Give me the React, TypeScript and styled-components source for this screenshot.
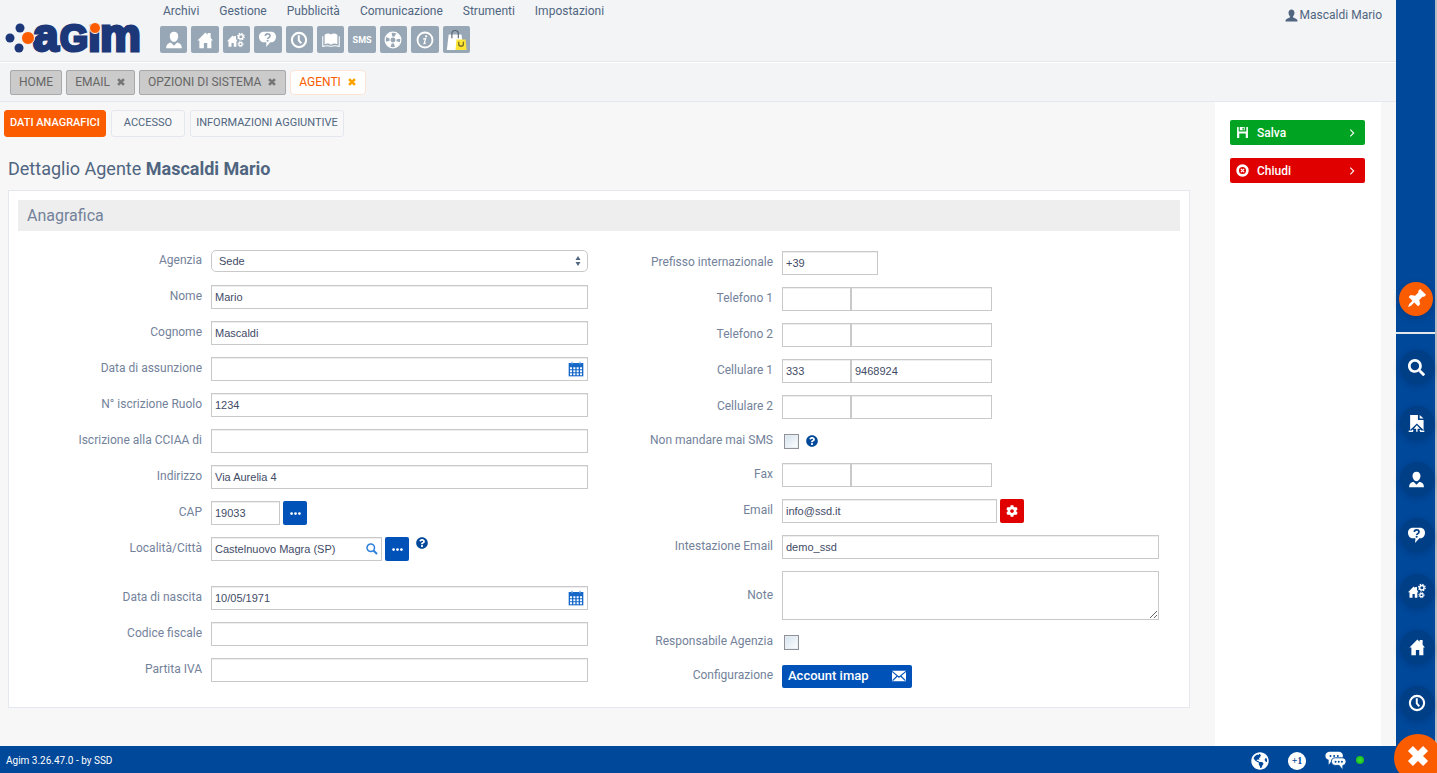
import React from 'react';
import styled, { createGlobalStyle, css } from 'styled-components';
import { FaCog, FaGlobeAmericas, FaQuestionCircle, FaSearch } from 'react-icons/fa';

const color = {
  navy: '#00489a',
  navyDark: '#003f86',
  blue: '#0052b8',
  orange: '#fc5c00',
  green: '#00a322',
  red: '#e00000',
  slate: '#4f6580',
  label: '#73829a',
  line: '#e4e7ee',
  field: '#c9c9c9',
};

const GlobalStyle = createGlobalStyle`
  *, *::before, *::after { box-sizing: border-box; }
  body {
    margin: 0;
    background: #f7f7f7;
    color: ${color.slate};
    font-family: Roboto, "Liberation Sans", sans-serif;
    font-size: 12px;
    line-height: 16px;
  }
  button, input, select, textarea { margin: 0; font: inherit; color: inherit; }
  button { cursor: pointer; }
  svg { display: block; flex: none; }
`;

/* ---------- icons ---------- */

type IconProps = { size?: number };

const Svg = styled.svg.attrs({ viewBox: '0 0 24 24', 'aria-hidden': true })<{ $size: number }>`
  width: ${(p) => p.$size}px;
  height: ${(p) => p.$size}px;
  fill: currentColor;
`;

const UserIcon = ({ size = 18 }: IconProps) => (
  <Svg $size={size}>
    <path d="M12 1c3.600 0 5.800 2.600 5.600 6.200C17.400 11 15 14.500 12 14.500S6.600 11 6.400 7.200C6.200 3.600 8.400 1 12 1z" />
    <path d="M1.500 23c0-4.600 2-6.600 6.300-7.700L12 19.500l4.200-4.200c4.300 1.100 6.300 3.100 6.300 7.700z" />
  </Svg>
);

const PersonIcon = ({ size = 13 }: IconProps) => (
  <Svg $size={size}>
    <path d="M12 1c3.400 0 5.500 2.400 5.500 6 0 2.800-1 5-2.500 6.500v2c3 1.500 8 2.500 8 5.500v2H1v-2c0-3 5-4 8-5.500v-2C7.500 12 6.500 9.800 6.500 7c0-3.600 2.100-6 5.500-6z" />
  </Svg>
);

const HomeIcon = ({ size = 18 }: IconProps) => (
  <Svg $size={size}>
    <path d="M2 12.500 12.500 2l3 3V2.500h4V9l3 3.500h-2V23H15v-7h-4.500v7H4.500V12.500z" />
  </Svg>
);

const HomeGearsIcon = ({ size = 18 }: IconProps) => (
  <Svg $size={size}>
    <path d="M0 13.500 7.500 6l2 2V6.500h2.500v4l2 3h-1.500V21H9v-5H6v5H2v-7.500z" />
    <g fill="none" stroke="currentColor">
      <circle cx="18.500" cy="7.500" r="3" strokeWidth="2" />
      <circle cx="18.500" cy="7.500" r="4.500" strokeWidth="1.500" strokeDasharray="1.800 1.730" />
      <circle cx="18" cy="17.500" r="2.200" strokeWidth="1.800" />
      <circle cx="18" cy="17.500" r="3.500" strokeWidth="1.200" strokeDasharray="1.500 1.250" />
    </g>
  </Svg>
);

const QuestionBubbleIcon = ({ size = 18, hole }: IconProps & { hole: string }) => (
  <Svg $size={size}>
    <path d="M7 1h10c4.500 0 7 3 7 7s-2.500 8-7 8h-1l-6 6.500.5-6.500H7c-4.500 0-7-4-7-8s2.500-7 7-7z" />
    <path d="M9 7c0-4 6.500-4 6.500 0 0 2.200-3.200 2.400-3.200 4.300" fill="none" stroke={hole} strokeWidth="2.400" />
    <circle cx="12.200" cy="13.800" r="1.500" fill={hole} />
  </Svg>
);

const ClockIcon = ({ size = 18 }: IconProps) => (
  <Svg $size={size}>
    <circle cx="12" cy="12" r="9.500" fill="none" stroke="currentColor" strokeWidth="2.800" />
    <path d="M11.700 5.500v7l3.300 4" fill="none" stroke="currentColor" strokeWidth="2.600" />
  </Svg>
);

const BookIcon = ({ size = 18 }: IconProps) => (
  <Svg $size={size}>
    <path d="M3.500 5C6 3 10 3 12 4.800 14 3 18 3 20.500 5v12.500c-3-1-6-1-8.500.8-2.500-1.800-5.500-1.800-8.500-.8z" />
    <path d="M1 7v13.500c4-1.200 8-1.200 11 0 3-1.200 7-1.200 11 0V7" fill="none" stroke="currentColor" strokeWidth="1.400" />
  </Svg>
);

const LifeRingIcon = ({ size = 18 }: IconProps) => (
  <Svg $size={size}>
    <g fill="none" stroke="currentColor">
      <circle cx="12" cy="12" r="10.500" strokeWidth="1.600" />
      <circle cx="12" cy="12" r="4" strokeWidth="1.400" />
      <circle cx="12" cy="12" r="7" strokeWidth="6" strokeDasharray="6.500 4.495" strokeDashoffset="8.750" />
    </g>
  </Svg>
);

const InfoIcon = ({ size = 18 }: IconProps) => (
  <Svg $size={size}>
    <circle cx="12" cy="12" r="10" fill="none" stroke="currentColor" strokeWidth="2.400" />
    <circle cx="13.500" cy="7" r="1.500" />
    <path d="m9.500 10.800 3.300-.8-2 6.800 2.200-.6" fill="none" stroke="currentColor" strokeWidth="1.600" />
  </Svg>
);

const ShopBagIcon = () => (
  <Svg $size={22}>
    <path d="M4 6h14l2 17H2z" fill="#fff" />
    <path d="M7.500 10V5c0-4.500 7-4.500 7 0v5" fill="none" stroke="#55606c" strokeWidth="1.200" />
    <path d="M12.500 11.500h10l1 11.500h-12z" fill="#fde535" />
    <path d="M15 14v2.500c0 3 5 3 5 0V14" fill="none" stroke="#6c6420" strokeWidth="1.300" />
  </Svg>
);

const CrossIcon = ({ size = 10 }: IconProps) => (
  <Svg $size={size}>
    <path d="m5 5 14 14M19 5 5 19" fill="none" stroke="currentColor" strokeWidth="6.500" />
  </Svg>
);

const PinIcon = () => (
  <Svg $size={20}>
    <path
      transform="rotate(45 12 12)"
      d="M7 0h10v3l-1.500 1.500v5.500l4.500 3v3.500h-6.500V22L12 25.500 10.500 22v-5.500H4V13l4.500-3V4.500L7 3z"
    />
  </Svg>
);

const FileIcon = ({ size = 18 }: IconProps) => (
  <Svg $size={size}>
    <path d="M3 0h11v7h8v14l-9.500-9L3 21z" />
    <path d="M16.500 0v5H22z" />
    <path d="M1 23h5l1-2M23 23h-5l-1-2M12.500 23.500V18" fill="none" stroke="currentColor" strokeWidth="2" />
    <path d="m12.500 14.500 4.500 5H8z" />
  </Svg>
);

const SaveIcon = ({ size = 13 }: IconProps) => (
  <Svg $size={size}>
    <path d="M2 2h3v8h14V2h3v20h-4v-8H6v8H2zM7 2h9v6H7zM12 3v4h2.500V3z" fillRule="evenodd" />
  </Svg>
);

const CloseRingIcon = ({ size = 13 }: IconProps) => (
  <Svg $size={size}>
    <circle cx="12" cy="12" r="9" fill="none" stroke="currentColor" strokeWidth="5" />
    <path d="m9 9 6 6M15 9l-6 6" stroke="currentColor" strokeWidth="2.400" />
  </Svg>
);

const ChevronIcon = () => (
  <Svg $size={8}>
    <path d="m7 2 10 10L7 22" fill="none" stroke="currentColor" strokeWidth="3.200" />
  </Svg>
);

const MailIcon = () => (
  <Svg $size={14}>
    <path d="M0 3h24v18H0z" />
    <path d="m0 4 12 10L24 4M1 20l8-8M23 20l-8-8" fill="none" stroke={color.blue} strokeWidth="2" />
  </Svg>
);

const DotsIcon = () => (
  <Svg $size={11}>
    <circle cx="3.500" cy="12" r="3" />
    <circle cx="12" cy="12" r="3" />
    <circle cx="20.500" cy="12" r="3" />
  </Svg>
);

const CalendarIcon = () => (
  <Svg $size={16}>
    <path d="M1 3h22v20H1z" fill="#1668c8" />
    <path d="M6 1v4M18 1v4" stroke="#6fa3e0" strokeWidth="2" />
    <path
      d="M3 9.500h3v3H3zM8 9.500h3v3H8zM13 9.500h3v3h-3zM18 9.500h3v3h-3zM3 14h3v3H3zM8 14h3v3H8zM13 14h3v3h-3zM18 14h3v3h-3zM3 18.500h3v3H3zM8 18.500h3v3H8zM13 18.500h3v3h-3zM18 18.500h3v3h-3z"
      fill="#fff"
    />
  </Svg>
);

const LensIcon = () => (
  <Svg $size={12}>
    <circle cx="9.500" cy="9.500" r="7.500" fill="none" stroke="#2f80dc" strokeWidth="3" />
    <path d="m15 15 7 7" stroke="#2f80dc" strokeWidth="4" />
  </Svg>
);

const SortIcon = () => (
  <Svg $size={12}>
    <path d="M12 2l5 8H7zM12 22l5-8H7z" />
  </Svg>
);

const ChatIcon = () => (
  <Svg $size={22}>
    <path d="M6 2h8c4 0 5.500 2 5.500 4.500S18 11 14 11H8l-4 5v-5.500C2 10 .5 9 .5 6.500S2 2 6 2z" />
    <path
      d="M11.500 8.500h7c3 0 4.500 1.800 4.500 4s-1.500 4.300-3.500 4.300V22l-4-5.200h-4C8.500 16.800 7 15 7 12.500s1.500-4 4.500-4z"
      stroke={color.navy}
      strokeWidth="1"
    />
    <g fill={color.navy}>
      <circle cx="6" cy="6.500" r="1.100" />
      <circle cx="10" cy="6.500" r="1.100" />
      <circle cx="14" cy="6.500" r="1.100" />
      <circle cx="11.500" cy="12.700" r="1.100" />
      <circle cx="15" cy="12.700" r="1.100" />
      <circle cx="18.500" cy="12.700" r="1.100" />
    </g>
  </Svg>
);

const LogoSvg = styled.svg`
  width: 138px;
  height: 36px;
  overflow: visible;
  text {
    font-family: 'Liberation Sans', Arial, sans-serif;
    font-weight: 700;
    fill: #1c3879;
    stroke: #1c3879;
    stroke-width: 3px;
  }
`;

const Logo = () => (
  <LogoSvg viewBox="0 0 138 36" role="img" aria-label="agim">
    <g fill="#1c3879">
      <circle cx="5" cy="18" r="4.500" />
      <circle cx="15" cy="8" r="4.500" />
      <circle cx="14" cy="28" r="4.500" />
    </g>
    <text x="28" y="31" fontSize="46">a</text>
    <text x="55" y="31" fontSize="36">G</text>
    <text x="83" y="31" fontSize="46">ı</text>
    <text x="95" y="31" fontSize="46">m</text>
    <circle cx="23" cy="18" r="6.500" fill={color.orange} stroke="#f3f4f6" />
    <circle cx="90" cy="8" r="5.500" fill={color.orange} stroke="#f3f4f6" />
  </LogoSvg>
);

/* ---------- shell ---------- */

const Shell = styled.div`
  display: flex;
  min-height: 100vh;
  overflow: hidden;
`;

const Page = styled.div`
  flex: 1;
  min-width: 0;
  display: flex;
  flex-direction: column;
`;

const Header = styled.header`
  display: flex;
  align-items: flex-start;
  padding: 3px 14px 8px 5px;
  background: #f3f4f6;
  border-bottom: 1px solid ${color.line};
`;

const LogoLink = styled.a`
  margin: 17px 17px -3px 0;
`;

const MenuBlock = styled.div`
  flex: 1;
`;

const MenuBar = styled.nav`
  display: flex;
  gap: 20px;
  padding-left: 3px;
`;

const MenuLink = styled.a`
  color: ${color.slate};
  text-decoration: none;
`;

const Toolbar = styled.div`
  display: grid;
  grid-template-columns: repeat(10, 1fr);
  gap: 4px;
  width: 310px;
  margin-top: 7px;
`;

const Tile = styled.button`
  display: flex;
  align-items: center;
  justify-content: center;
  height: 27px;
  padding: 0;
  border: 0;
  border-radius: 2px;
  background: #98a7b6;
  color: #fff;
  font-size: 9px;
  font-weight: 700;
`;

const UserLink = styled.a`
  display: flex;
  align-items: center;
  gap: 2px;
  margin-top: 4px;
  color: ${color.slate};
  text-decoration: none;
`;

const TabBar = styled.nav`
  display: flex;
  align-items: center;
  gap: 4px;
  height: 40px;
  padding-left: 10px;
  background: #f3f4f6;
  border-top: 1px solid #fff;
  border-bottom: 1px solid ${color.line};
`;

const Tab = styled.div<{ $active?: boolean }>`
  display: flex;
  align-items: center;
  gap: 6px;
  height: 25px;
  padding: 0 8px;
  border: 1px solid #a9a9a9;
  border-radius: 2px;
  background: #cbcbcb;
  color: #666;
  ${(p) =>
    p.$active &&
    css`
      border-color: #fde3d4;
      border-radius: 4px;
      background: #fff;
      color: ${color.orange};
    `}
`;

const TabLink = styled.a`
  color: inherit;
  text-decoration: none;
`;

const TabClose = styled.button<{ $active?: boolean }>`
  padding: 0;
  border: 0;
  background: none;
  color: ${(p) => (p.$active ? '#fba400' : '#777')};
`;

const Body = styled.div`
  flex: 1;
  display: flex;
`;

const Content = styled.main`
  flex: 1;
  min-width: 0;
  padding: 8px 25px 36px 4px;
`;

const Aside = styled.aside`
  flex: none;
  width: 166px;
  margin-right: 15px;
  padding: 18px 16px 18px 15px;
  background: #fff;
`;

const ActionButton = styled.button<{ $color: string }>`
  display: flex;
  align-items: center;
  width: 100%;
  height: 25px;
  margin-bottom: 13px;
  padding: 0 9px 0 6px;
  border: 0;
  border-radius: 2px;
  background: ${(p) => p.$color};
  color: #fff;
  font-weight: 500;
`;

const ActionLabel = styled.span`
  flex: 1;
  padding-left: 8px;
  text-align: left;
`;

const SubTabs = styled.nav`
  display: flex;
  gap: 5px;
`;

const SubTab = styled.button<{ $active?: boolean; $wide?: boolean }>`
  height: 27px;
  padding: 0 ${(p) => (p.$wide ? 12 : 5)}px 2px;
  border: 1px solid ${(p) => (p.$active ? color.orange : color.line)};
  border-radius: 3px;
  background: ${(p) => (p.$active ? color.orange : '#f8f8f8')};
  color: ${(p) => (p.$active ? '#fff' : color.slate)};
  font-size: 11px;
  font-weight: ${(p) => (p.$active ? 500 : 400)};
`;

const Title = styled.h1`
  margin: 19px 4px 9px;
  font-size: 18px;
  font-weight: 400;
  line-height: 25px;
`;

/* ---------- form ---------- */

const Panel = styled.section`
  margin-left: 4px;
  padding: 9px 9px 13px;
  border: 1px solid ${color.line};
  background: #fff;
`;

const PanelTitle = styled.h2`
  margin: 0 0 12px;
  padding: 0 9px;
  background: #eee;
  color: ${color.label};
  font-size: 16px;
  font-weight: 400;
  line-height: 31px;
`;

const Form = styled.form`
  display: grid;
  grid-template-columns: 1fr 1fr;
  padding-right: 20px;
`;

const Column = styled.div<{ $lowered?: boolean }>`
  min-width: 0;
  padding-top: ${(p) => (p.$lowered ? 2 : 0)}px;
`;

const Row = styled.div<{ $height?: number; $spaced?: boolean }>`
  display: grid;
  grid-template-columns: 184px minmax(0, 1fr);
  column-gap: 9px;
  align-items: center;
  height: ${(p) => p.$height ?? 36}px;
  margin-bottom: ${(p) => (p.$spaced ? 13 : 0)}px;
  padding-right: 1px;
`;

const Label = styled.label`
  padding-bottom: 2px;
  color: ${color.label};
  text-align: right;
`;

const Controls = styled.div`
  display: flex;
  align-items: center;
`;

const fieldText = css`
  color: #3f4b66;
  font-family: 'Liberation Sans', Arial, sans-serif;
  font-size: 11px;
`;

const Input = styled.input<{ $width?: number }>`
  ${fieldText}
  width: ${(p) => (p.$width ? `${p.$width}px` : '100%')};
  height: 24px;
  padding: 0 3px 1px;
  border: 1px solid ${color.field};
  border-radius: 0;
  background: #fff;
  box-shadow: inset 0 1px 0 #eee;
`;

const FieldWrap = styled.div<{ $width?: number }>`
  position: relative;
  width: ${(p) => (p.$width ? `${p.$width}px` : '100%')};
`;

const FieldIcon = styled.span`
  position: absolute;
  top: 0;
  right: 4px;
  display: flex;
  align-items: center;
  height: 100%;
  pointer-events: none;
`;

const Select = styled.select`
  ${fieldText}
  display: block;
  appearance: none;
  width: 100%;
  height: 22px;
  padding: 0 20px 0 7px;
  border: 1px solid ${color.field};
  border-radius: 5px;
  background: #fff;
`;

const TextArea = styled.textarea`
  ${fieldText}
  display: block;
  width: 100%;
  height: 49px;
  border: 1px solid ${color.field};
  background: #fff;
`;

const SquareButton = styled.button<{ $color?: string }>`
  display: flex;
  align-items: center;
  justify-content: center;
  width: 24px;
  height: 24px;
  margin-left: 3px;
  padding: 0;
  border: 0;
  border-radius: 2px;
  background: ${(p) => p.$color ?? color.blue};
  color: #fff;
`;

const Checkbox = styled.input`
  appearance: none;
  width: 15px;
  height: 15px;
  margin-left: 2px;
  border: 1px solid #8e9298;
  background: linear-gradient(135deg, #d3e2ee, #fff);
  box-shadow: inset 0 0 0 1px #e9eef2;
`;

const Help = styled.span<{ $raised?: boolean }>`
  margin-left: 7px;
  align-self: ${(p) => (p.$raised ? 'flex-start' : 'center')};
  color: ${color.navy};
  font-size: 12px;
`;

const AccountButton = styled.button`
  display: flex;
  align-items: center;
  justify-content: space-between;
  width: 130px;
  height: 23px;
  padding: 0 6px;
  border: 0;
  border-radius: 2px;
  background: ${color.blue};
  color: #fff;
  font-size: 13px;
  font-weight: 500;
`;

/* ---------- footer and rail ---------- */

const Footer = styled.footer`
  display: flex;
  align-items: center;
  height: 27px;
  padding: 2px 32px 0 6px;
  background: ${color.navy};
  color: #fff;
  font-size: 10px;
`;

const FooterTools = styled.div`
  display: flex;
  align-items: center;
  gap: 19px;
  margin-left: auto;
  font-size: 18px;
`;

const FooterButton = styled.button`
  display: flex;
  align-items: center;
  padding: 0;
  border: 0;
  background: none;
  color: #fff;
`;

const PlusOne = styled.span`
  width: 18px;
  border-radius: 9px;
  background: #fff;
  color: ${color.navy};
  font: 700 10px/18px 'Liberation Serif', serif;
`;

const ChatStatus = styled.span`
  display: flex;
  align-items: center;
  gap: 9px;
`;

const OnlineDot = styled.span`
  width: 8px;
  height: 8px;
  margin-bottom: 2px;
  border-radius: 50%;
  background: radial-gradient(#3be03b, #10b010);
`;

const Rail = styled.nav`
  position: sticky;
  top: 0;
  flex: none;
  display: flex;
  flex-direction: column;
  align-items: center;
  justify-content: flex-end;
  gap: 22px;
  width: 41px;
  height: 100vh;
  padding: 0 0 53px 2px;
  background: ${color.navy};
  border-right: 2px solid #b9bcc2;
`;

const PinGroup = styled.div`
  display: flex;
  justify-content: center;
  align-self: stretch;
  margin: 0 0 -6px -2px;
  padding-bottom: 16px;
  border-bottom: 2px solid #e3e6ea;
`;

const RailButton = styled.button<{ $accent?: boolean }>`
  display: flex;
  align-items: center;
  justify-content: center;
  width: 34px;
  height: 34px;
  padding: 0;
  border: 0;
  border-radius: 50%;
  background: ${(p) => (p.$accent ? color.orange : color.navyDark)};
  box-shadow: 0 2px 6px rgba(0, 30, 80, 0.3);
  color: #fff;
`;

const CloseRail = styled.button`
  position: absolute;
  right: -7px;
  bottom: -9px;
  display: flex;
  align-items: center;
  justify-content: center;
  width: 48px;
  height: 48px;
  padding: 0 0 4px;
  border: 0;
  border-radius: 50%;
  background: ${color.orange};
  color: #fff;
`;

/* ---------- data ---------- */

const menu = ['Archivi', 'Gestione', 'Pubblicità', 'Comunicazione', 'Strumenti', 'Impostazioni'];

const tiles: [string, React.ReactNode][] = [
  ['Clienti', <UserIcon />],
  ['Immobili', <HomeIcon />],
  ['Gestione immobili', <HomeGearsIcon />],
  ['Richieste', <QuestionBubbleIcon hole="#98a7b6" size={17} />],
  ['Agenda', <ClockIcon />],
  ['Rubrica', <BookIcon />],
  ['SMS', 'SMS'],
  ['Assistenza', <LifeRingIcon />],
  ['Informazioni', <InfoIcon />],
  ['Negozio', <ShopBagIcon />],
];

const tabs = [
  { name: 'HOME' },
  { name: 'EMAIL', closable: true },
  { name: 'OPZIONI DI SISTEMA', closable: true },
  { name: 'AGENTI', closable: true, active: true },
];

const railItems: [string, React.ReactNode][] = [
  ['Cerca', <FaSearch size={17} />],
  ['Documenti', <FileIcon size={17} />],
  ['Clienti', <UserIcon size={17} />],
  ['Richieste', <QuestionBubbleIcon hole={color.navyDark} size={17} />],
  ['Gestione immobili', <HomeGearsIcon />],
  ['Immobili', <HomeIcon />],
  ['Agenda', <ClockIcon />],
];

/* ---------- composed fields ---------- */

type FieldProps = { id: string; label: string; value?: string; width?: number };

const TextRow = ({ id, label, value, width }: FieldProps) => (
  <Row>
    <Label htmlFor={id}>{label}</Label>
    <Input id={id} defaultValue={value} $width={width} />
  </Row>
);

const DateRow = ({ id, label, value }: FieldProps) => (
  <Row>
    <Label htmlFor={id}>{label}</Label>
    <FieldWrap>
      <Input id={id} defaultValue={value} />
      <FieldIcon><CalendarIcon /></FieldIcon>
    </FieldWrap>
  </Row>
);

const PhoneRow = ({ id, label, prefix, value }: FieldProps & { prefix?: string }) => (
  <Row>
    <Label htmlFor={id}>{label}</Label>
    <Controls>
      <Input id={id} defaultValue={prefix} $width={69} />
      <Input aria-label={`${label} numero`} defaultValue={value} $width={141} />
    </Controls>
  </Row>
);

export default function App() {
  return (
    <>
      <GlobalStyle />
      <Shell>
        <Page>
          <Header>
            <LogoLink href="#"><Logo /></LogoLink>
            <MenuBlock>
              <MenuBar>
                {menu.map((m) => <MenuLink href="#" key={m}>{m}</MenuLink>)}
              </MenuBar>
              <Toolbar>
                {tiles.map(([name, icon]) => <Tile key={name} aria-label={name}>{icon}</Tile>)}
              </Toolbar>
            </MenuBlock>
            <UserLink href="#"><PersonIcon />Mascaldi Mario</UserLink>
          </Header>

          <TabBar>
            {tabs.map((t) => (
              <Tab key={t.name} $active={t.active}>
                <TabLink href="#">{t.name}</TabLink>
                {t.closable && (
                  <TabClose $active={t.active} aria-label={`Chiudi ${t.name}`}><CrossIcon /></TabClose>
                )}
              </Tab>
            ))}
          </TabBar>

          <Body>
            <Content>
              <SubTabs>
                <SubTab $active>DATI ANAGRAFICI</SubTab>
                <SubTab $wide>ACCESSO</SubTab>
                <SubTab>INFORMAZIONI AGGIUNTIVE</SubTab>
              </SubTabs>
              <Title>Dettaglio Agente <b>Mascaldi Mario</b></Title>

              <Panel>
                <PanelTitle>Anagrafica</PanelTitle>
                <Form onSubmit={(e) => e.preventDefault()}>
                  <Column>
                    <Row>
                      <Label htmlFor="agenzia">Agenzia</Label>
                      <FieldWrap>
                        <Select id="agenzia"><option>Sede</option></Select>
                        <FieldIcon><SortIcon /></FieldIcon>
                      </FieldWrap>
                    </Row>
                    <TextRow id="nome" label="Nome" value="Mario" />
                    <TextRow id="cognome" label="Cognome" value="Mascaldi" />
                    <DateRow id="assunzione" label="Data di assunzione" />
                    <TextRow id="ruolo" label="N° iscrizione Ruolo" value="1234" />
                    <TextRow id="cciaa" label="Iscrizione alla CCIAA di" />
                    <TextRow id="indirizzo" label="Indirizzo" value="Via Aurelia 4" />
                    <Row>
                      <Label htmlFor="cap">CAP</Label>
                      <Controls>
                        <Input id="cap" defaultValue="19033" $width={69} />
                        <SquareButton type="button" aria-label="Scegli CAP"><DotsIcon /></SquareButton>
                      </Controls>
                    </Row>
                    <Row $spaced>
                      <Label htmlFor="localita">Località/Città</Label>
                      <Controls>
                        <FieldWrap $width={171}>
                          <Input id="localita" defaultValue="Castelnuovo Magra (SP)" />
                          <FieldIcon><LensIcon /></FieldIcon>
                        </FieldWrap>
                        <SquareButton type="button" aria-label="Scegli località"><DotsIcon /></SquareButton>
                        <Help $raised><FaQuestionCircle /></Help>
                      </Controls>
                    </Row>
                    <DateRow id="nascita" label="Data di nascita" value="10/05/1971" />
                    <TextRow id="fiscale" label="Codice fiscale" />
                    <TextRow id="iva" label="Partita IVA" />
                  </Column>

                  <Column $lowered>
                    <TextRow id="prefisso" label="Prefisso internazionale" value="+39" width={96} />
                    <PhoneRow id="tel1" label="Telefono 1" />
                    <PhoneRow id="tel2" label="Telefono 2" />
                    <PhoneRow id="cell1" label="Cellulare 1" prefix="333" value="9468924" />
                    <PhoneRow id="cell2" label="Cellulare 2" />
                    <Row $height={32}>
                      <Label htmlFor="nosms">Non mandare mai SMS</Label>
                      <Controls>
                        <Checkbox type="checkbox" id="nosms" />
                        <Help><FaQuestionCircle /></Help>
                      </Controls>
                    </Row>
                    <PhoneRow id="fax" label="Fax" />
                    <Row>
                      <Label htmlFor="email">Email</Label>
                      <Controls>
                        <Input id="email" defaultValue="info@ssd.it" $width={215} />
                        <SquareButton type="button" $color={color.red} aria-label="Configura email"><FaCog size={12} /></SquareButton>
                      </Controls>
                    </Row>
                    <TextRow id="intestazione" label="Intestazione Email" value="demo_ssd" />
                    <Row $height={61}>
                      <Label htmlFor="note">Note</Label>
                      <TextArea id="note" />
                    </Row>
                    <Row $height={32}>
                      <Label htmlFor="responsabile">Responsabile Agenzia</Label>
                      <Controls><Checkbox type="checkbox" id="responsabile" /></Controls>
                    </Row>
                    <Row>
                      <Label htmlFor="imap">Configurazione</Label>
                      <AccountButton id="imap" type="button">Account imap<MailIcon /></AccountButton>
                    </Row>
                  </Column>
                </Form>
              </Panel>
            </Content>

            <Aside>
              <ActionButton $color={color.green}>
                <SaveIcon /><ActionLabel>Salva</ActionLabel><ChevronIcon />
              </ActionButton>
              <ActionButton $color={color.red}>
                <CloseRingIcon /><ActionLabel>Chiudi</ActionLabel><ChevronIcon />
              </ActionButton>
            </Aside>
          </Body>

          <Footer>
            Agim 3.26.47.0 - by SSD
            <FooterTools>
              <FooterButton aria-label="Sito web"><FaGlobeAmericas /></FooterButton>
              <FooterButton><PlusOne>+1</PlusOne></FooterButton>
              <ChatStatus>
                <FooterButton aria-label="Chat"><ChatIcon /></FooterButton>
                <OnlineDot />
              </ChatStatus>
            </FooterTools>
          </Footer>
        </Page>

        <Rail>
          <PinGroup>
            <RailButton $accent aria-label="Fissa"><PinIcon /></RailButton>
          </PinGroup>
          {railItems.map(([name, icon]) => <RailButton key={name} aria-label={name}>{icon}</RailButton>)}
          <CloseRail aria-label="Chiudi menu"><CrossIcon size={26} /></CloseRail>
        </Rail>
      </Shell>
    </>
  );
}
